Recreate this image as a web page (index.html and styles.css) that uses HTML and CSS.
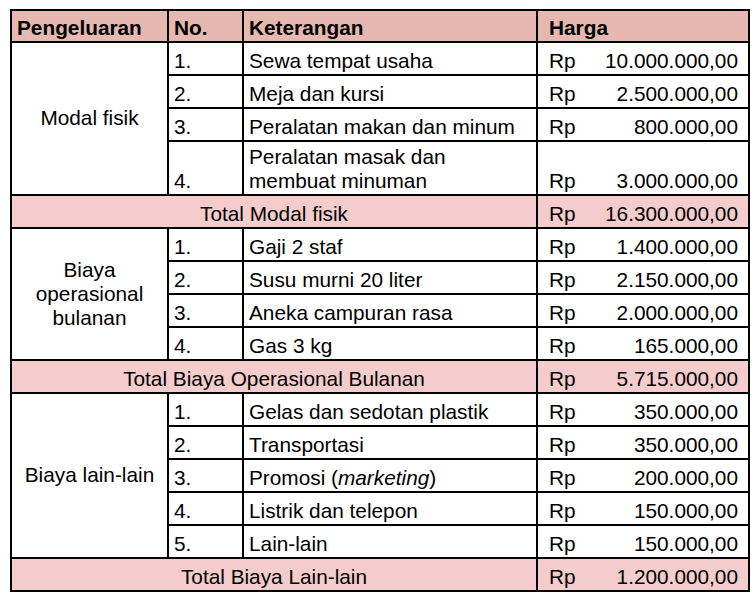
FILE: index.html
```html
<!DOCTYPE html>
<html lang="id">
<head>
<meta charset="utf-8">
<title>Pengeluaran</title>
<link rel="stylesheet" href="styles.css">
</head>
<body>
<table class="sheet">
  <colgroup>
    <col class="c1"><col class="c2"><col class="c3"><col class="c4">
  </colgroup>
  <tr class="head">
    <td>Pengeluaran</td><td>No.</td><td>Keterangan</td><td class="hh">Harga</td>
  </tr>
  <tr>
    <td class="group" rowspan="4">Modal fisik</td>
    <td>1.</td><td>Sewa tempat usaha</td>
    <td><div class="money"><span>Rp</span><span>10.000.000,00</span></div></td>
  </tr>
  <tr>
    <td>2.</td><td>Meja dan kursi</td>
    <td><div class="money"><span>Rp</span><span>2.500.000,00</span></div></td>
  </tr>
  <tr>
    <td>3.</td><td>Peralatan makan dan minum</td>
    <td><div class="money"><span>Rp</span><span>800.000,00</span></div></td>
  </tr>
  <tr class="tall">
    <td>4.</td><td>Peralatan masak dan<br>membuat minuman</td>
    <td><div class="money"><span>Rp</span><span>3.000.000,00</span></div></td>
  </tr>
  <tr class="total">
    <td colspan="3" class="label">Total Modal fisik</td>
    <td><div class="money"><span>Rp</span><span>16.300.000,00</span></div></td>
  </tr>
  <tr>
    <td class="group" rowspan="4">Biaya<br>operasional<br>bulanan</td>
    <td>1.</td><td>Gaji 2 staf</td>
    <td><div class="money"><span>Rp</span><span>1.400.000,00</span></div></td>
  </tr>
  <tr>
    <td>2.</td><td>Susu murni 20 liter</td>
    <td><div class="money"><span>Rp</span><span>2.150.000,00</span></div></td>
  </tr>
  <tr>
    <td>3.</td><td>Aneka campuran rasa</td>
    <td><div class="money"><span>Rp</span><span>2.000.000,00</span></div></td>
  </tr>
  <tr>
    <td>4.</td><td>Gas 3 kg</td>
    <td><div class="money"><span>Rp</span><span>165.000,00</span></div></td>
  </tr>
  <tr class="total">
    <td colspan="3" class="label">Total Biaya Operasional Bulanan</td>
    <td><div class="money"><span>Rp</span><span>5.715.000,00</span></div></td>
  </tr>
  <tr>
    <td class="group" rowspan="5">Biaya lain-lain</td>
    <td>1.</td><td>Gelas dan sedotan plastik</td>
    <td><div class="money"><span>Rp</span><span>350.000,00</span></div></td>
  </tr>
  <tr>
    <td>2.</td><td>Transportasi</td>
    <td><div class="money"><span>Rp</span><span>350.000,00</span></div></td>
  </tr>
  <tr>
    <td>3.</td><td>Promosi (<em>marketing</em>)</td>
    <td><div class="money"><span>Rp</span><span>200.000,00</span></div></td>
  </tr>
  <tr>
    <td>4.</td><td>Listrik dan telepon</td>
    <td><div class="money"><span>Rp</span><span>150.000,00</span></div></td>
  </tr>
  <tr>
    <td>5.</td><td>Lain-lain</td>
    <td><div class="money"><span>Rp</span><span>150.000,00</span></div></td>
  </tr>
  <tr class="total">
    <td colspan="3" class="label">Total Biaya Lain-lain</td>
    <td><div class="money"><span>Rp</span><span>1.200.000,00</span></div></td>
  </tr>
</table>
</body>
</html>
```

FILE: styles.css
```css
html, body {
  margin: 0;
  padding: 0;
  background: #ffffff;
}
body {
  padding: 9px 0 0 10px;
}
.sheet {
  border-collapse: collapse;
  table-layout: fixed;
  width: 738px;
  font-family: "Liberation Sans", Arial, sans-serif;
  font-size: 20.8px;
  line-height: 24px;
  color: #000000;
}
.c1 { width: 157px; }
.c2 { width: 75px; }
.c3 { width: 294px; }
.c4 { width: 212px; }
.sheet td {
  border: 2px solid #000000;
  padding: 0 5px 1px 5px;
  vertical-align: bottom;
  height: 33px;
  box-sizing: border-box;
  white-space: nowrap;
}
.sheet tr.head td {
  background: #e6b8af;
  font-weight: bold;
  height: 32px;
}
.sheet tr.head td.hh {
  padding-left: 11px;
}
.sheet tr.tall td {
  height: 54px;
}
.sheet td.group {
  text-align: center;
  vertical-align: middle;
  white-space: normal;
}
.sheet tr.total td {
  background: #f4cccc;
}
.sheet td.label {
  text-align: center;
}
.money {
  display: flex;
  justify-content: space-between;
  padding: 0 5px 0 6px;
}
```
